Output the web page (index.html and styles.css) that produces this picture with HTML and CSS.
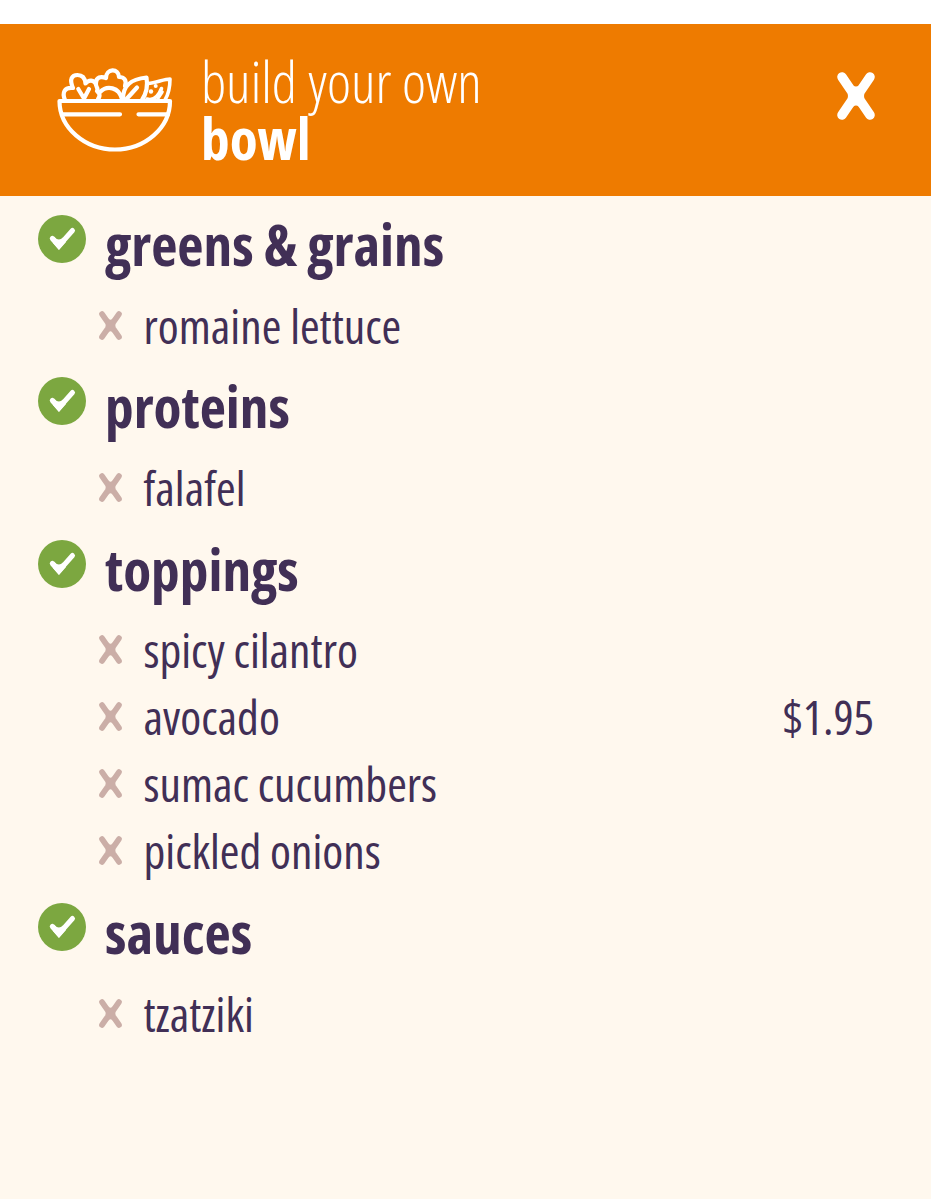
FILE: index.html
```
<!DOCTYPE html>
<html lang="en">
<head>
    <meta charset="UTF-8">
    <title>build your own bowl</title>
    <link rel="stylesheet" href="styles.css">
</head>
<body>
<!-- shared shapes -->
<svg class="shapes" width="0" height="0">
    <symbol id="cross" viewBox="0 0 38 48">
        <path d="M5 5L14.500 19Q17 24 14.500 29L5 43M33 5L23.500 19Q21 24 23.500 29L33 43" fill="none" stroke="currentColor" stroke-width="9.500" stroke-linecap="round" stroke-linejoin="round"/>
        <path d="M14 11Q16 14.500 19 14.500T24 11L26 24L24 37Q22 33.500 19 33.500T14 37L12 24Z" fill="currentColor"/>
    </symbol>
    <symbol id="check" viewBox="0 0 48 48">
        <circle cx="24" cy="24" r="24" fill="#7ca740"/>
        <path d="M14.300 23.500L20.800 31L34.500 15.500" fill="none" stroke="#fff" stroke-width="5" stroke-linecap="round"/>
        <path d="M16 21.500Q20.500 27 25 22.500L28 27L21 35L15 28Z" fill="#fff"/>
    </symbol>
</svg>
<div class="header">
    <svg class="bowl" viewBox="0 0 116 84" fill="none" stroke="#fff" stroke-width="4.2" stroke-linecap="round" stroke-linejoin="round">
        <path d="M2.500 33H113C113 60 88 81.500 58 81.500S2.500 60 2.500 33Z"/>
        <path d="M5 46.300H63M81.500 46.300H111"/>
        <path d="M8 32C5 25 7 19 16 20C12 11 15 7 20.500 7C26 7 28 10 28.500 15.500C32 11 37 12 39 16"/>
        <path d="M21.300 21L27 30.500L32 21M27 30V32"/>
        <path d="M41 31C44 27 42 25 40 23C42 20 38 19 39 15C39 9 44 8 49 10C49 0 62 0 62 9C67 9 70 12 68 18"/>
        <path d="M43 24C50 17 62 19 65 31"/>
        <path d="M66 31C66 17 74 11 89.500 9.500C91 18 89 26 85 32M70 30.500L80 19.500"/>
        <path d="M91 15.500C99 15 107 11 113 11C113 20 111 27 108 32M90 31C97 33 102 27 104.500 20.500M101 30L105 24" stroke-width="3.6"/>
        <g fill="#fff" stroke="none">
            <circle cx="94" cy="23.500" r="2.2"/>
            <circle cx="98.700" cy="18" r="2"/>
        </g>
    </svg>
    <h1><span>build your own</span><b>bowl</b></h1>
    <svg class="close"><use href="#cross"/></svg>
</div>
<div class="content">
    <h2><svg><use href="#check"/></svg><span>greens &amp; grains</span></h2>
    <ul>
        <li><svg><use href="#cross"/></svg><span>romaine lettuce</span></li>
    </ul>
    <h2><svg><use href="#check"/></svg><span>proteins</span></h2>
    <ul>
        <li><svg><use href="#cross"/></svg><span>falafel</span></li>
    </ul>
    <h2><svg><use href="#check"/></svg><span>toppings</span></h2>
    <ul>
        <li><svg><use href="#cross"/></svg><span>spicy cilantro</span></li>
        <li><svg><use href="#cross"/></svg><span>avocado</span><span class="price">$1.95</span></li>
        <li><svg><use href="#cross"/></svg><span>sumac cucumbers</span></li>
        <li><svg><use href="#cross"/></svg><span>pickled onions</span></li>
    </ul>
    <h2><svg><use href="#check"/></svg><span>sauces</span></h2>
    <ul>
        <li><svg><use href="#cross"/></svg><span>tzatziki</span></li>
    </ul>
</div>
</body>
</html>
```
FILE: styles.css
```
*{
    margin: 0;
    padding: 0;
    box-sizing: border-box;
}
body{
    padding-top: 24px;
    background: #fff;
    color: #412f56;
    font-family: "Open Sans", sans-serif;
    font-stretch: 75%;
}
.shapes{
    display: block;
}
.header{
    height: 172px;
    padding: 0 56px 0 57px;
    display: flex;
    background: #ee7b00;
    color: #fff;
}
.bowl{
    width: 116px;
    height: 84px;
    margin-top: 44px;
}
h1{
    margin: 29px 0 0 28px;
    font-size: 57.3px;
    line-height: 57px;
    font-weight: 300;
}
h1>span, h1>b{
    display: block;
}
h1>b{
    font-weight: 700;
}
.close{
    width: 38px;
    height: 48px;
    margin: 48px 0 0 auto;
    color: #fff;
}
.content{
    height: 1003px;
    background: #fff8ee;
    padding-left: 38px;
}
h2{
    height: 95.5px;
    display: flex;
    font-size: 57.3px;
    line-height: 96px;
    font-weight: 700;
}
h2>svg{
    width: 48px;
    height: 48px;
    margin: 19px 19px 0 0;
}
ul{
    list-style: none;
    padding: 0 57px 0 61px;
}
li{
    height: 66.95px;
    display: flex;
    font-size: 47.6px;
    line-height: 68.4px;
}
li>svg{
    width: 23px;
    height: 29px;
    margin: 19px 21.5px 0 0;
    color: #cbaea7;
}
.price{
    margin-left: auto;
}
```
